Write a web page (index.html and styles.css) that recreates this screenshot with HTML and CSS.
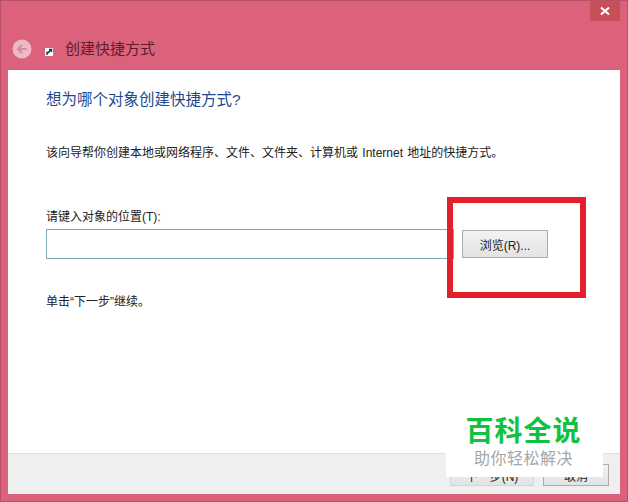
FILE: index.html
```html
<!DOCTYPE html>
<html lang="zh-CN">
<head>
    <meta charset="UTF-8">
    <title>创建快捷方式</title>
    <link rel="stylesheet" href="styles.css">
</head>
<body>
    <div class="window">
        <div class="close-bar">
            <div class="close-button">
                <svg width="10" height="10" viewBox="0 0 10 10"><path d="M1 1.5 L9 8.5 M9 1.5 L1 8.5" stroke="#fff" stroke-width="2"/></svg>
            </div>
        </div>
        <div class="title-bar">
            <div class="back-button">
                <svg width="20" height="20" viewBox="0 0 20 20"><circle cx="10" cy="10" r="9.5" fill="#eeb9c6"/><path d="M15 10 H6 M10 6 L6 10 L10 14" fill="none" stroke="#d98ba0" stroke-width="2"/></svg>
            </div>
            <div class="shortcut-icon">
                <svg width="8" height="8" viewBox="0 0 8 8"><rect width="8" height="8" fill="#fff"/><path d="M2 7 V4.5 H4.5 M2.5 5 L6 2 M4 1.5 H6.5 V4" fill="none" stroke="#12305c" stroke-width="1.4"/></svg>
            </div>
            <span class="title-text">创建快捷方式</span>
        </div>
        <div class="client">
            <div class="content">
                <h1 class="heading">想为哪个对象创建快捷方式?</h1>
                <p class="intro">该向导帮你创建本地或网络程序、文件、文件夹、计算机或 Internet 地址的快捷方式。</p>
                <label class="field-label">请键入对象的位置(T):</label>
                <div class="field-row">
                    <div class="field-input"></div>
                    <button class="button browse">浏览(R)...</button>
                </div>
                <p class="hint">单击“下一步”继续。</p>
            </div>
            <div class="footer">
                <button class="button next">下一步(N)</button>
                <button class="button cancel">取消</button>
            </div>
        </div>
        <div class="highlight"></div>
        <div class="watermark">
            <div class="watermark-title">百科全说</div>
            <div class="watermark-sub">助你轻松解决</div>
        </div>
    </div>
</body>
</html>
```

FILE: styles.css
```css
* {
    box-sizing: border-box;
    margin: 0;
    padding: 0;
}

body {
    width: 628px;
    height: 502px;
    overflow: hidden;
    font-family: "Liberation Sans", "Noto Sans CJK SC", sans-serif;
}

.window {
    position: relative;
    width: 628px;
    height: 502px;
    display: flex;
    flex-direction: column;
    background: #dc627c;
    border: 1px solid #b9506a;
    padding: 0 7px 7px;
}

.close-bar {
    display: flex;
    justify-content: flex-end;
    height: 21px;
}

.close-button {
    width: 30px;
    height: 20px;
    background: #c75058;
    display: flex;
    align-items: center;
    justify-content: center;
}

/* titulo */
.title-bar {
    height: 48px;
    display: flex;
    align-items: center;
    padding: 6px 0 0 4px;
}

.back-button {
    width: 20px;
    height: 20px;
    margin-right: 13px;
}

.back-button svg,
.shortcut-icon svg {
    display: block;
}

.shortcut-icon {
    width: 8px;
    height: 8px;
    margin: 6px 12px 0 0;
}

.title-text {
    font-size: 15px;
    color: #5c1c2c;
    margin-bottom: 4px;
}

.client {
    flex: 1;
    display: flex;
    flex-direction: column;
    background: #fff;
}

.content {
    flex: 1;
    padding: 19px 38px 0;
}

.heading {
    font-size: 15.5px;
    font-weight: 400;
    line-height: 22px;
    color: #1f4a8f;
}

.intro {
    font-size: 12px;
    line-height: 18px;
    word-spacing: 1px;
    color: #222;
    margin-top: 33px;
    white-space: nowrap;
}

.field-label {
    display: block;
    font-size: 12px;
    line-height: 18px;
    color: #222;
    margin-top: 46px;
}

.field-row {
    display: flex;
    align-items: center;
    margin-top: 3px;
}

.field-input {
    width: 408px;
    height: 30px;
    background: #fff;
    border: 1px solid #7fa9bc;
}

.button {
    font-family: inherit;
    font-size: 12px;
    color: #222;
    background: linear-gradient(#f2f2f2, #e3e3e3);
    border: 1px solid #acacac;
}

.browse {
    width: 86px;
    height: 28px;
    margin-left: 8px;
}

.hint {
    font-size: 12px;
    line-height: 18px;
    color: #222;
    margin-top: 34px;
}

.footer {
    height: 41px;
    display: flex;
    justify-content: flex-end;
    align-items: flex-start;
    gap: 9px;
    padding: 10px 11px 0 0;
    background: #efefef;
    border-top: 1px solid #dfdfdf;
}

.next {
    width: 84px;
    height: 22px;
    border-color: #d5d5d5;
}

.cancel {
    width: 66px;
    height: 22px;
}

/* marcacao vermelha por cima */
.highlight {
    position: absolute;
    left: 446px;
    top: 196px;
    width: 139px;
    height: 101px;
    border: 6px solid #e21f2d;
}

.watermark {
    position: absolute;
    left: 445px;
    top: 411px;
    width: 157px;
    height: 65px;
    padding-right: 2px;
    background: #fff;
    text-align: center;
}

.watermark-title {
    font-size: 28px;
    font-weight: 700;
    line-height: 40px;
    letter-spacing: 1px;
    color: #10c240;
}

.watermark-sub {
    font-size: 16px;
    line-height: 20px;
    letter-spacing: 0.5px;
    color: #a5a5a5;
    margin-top: -3px;
}
```
